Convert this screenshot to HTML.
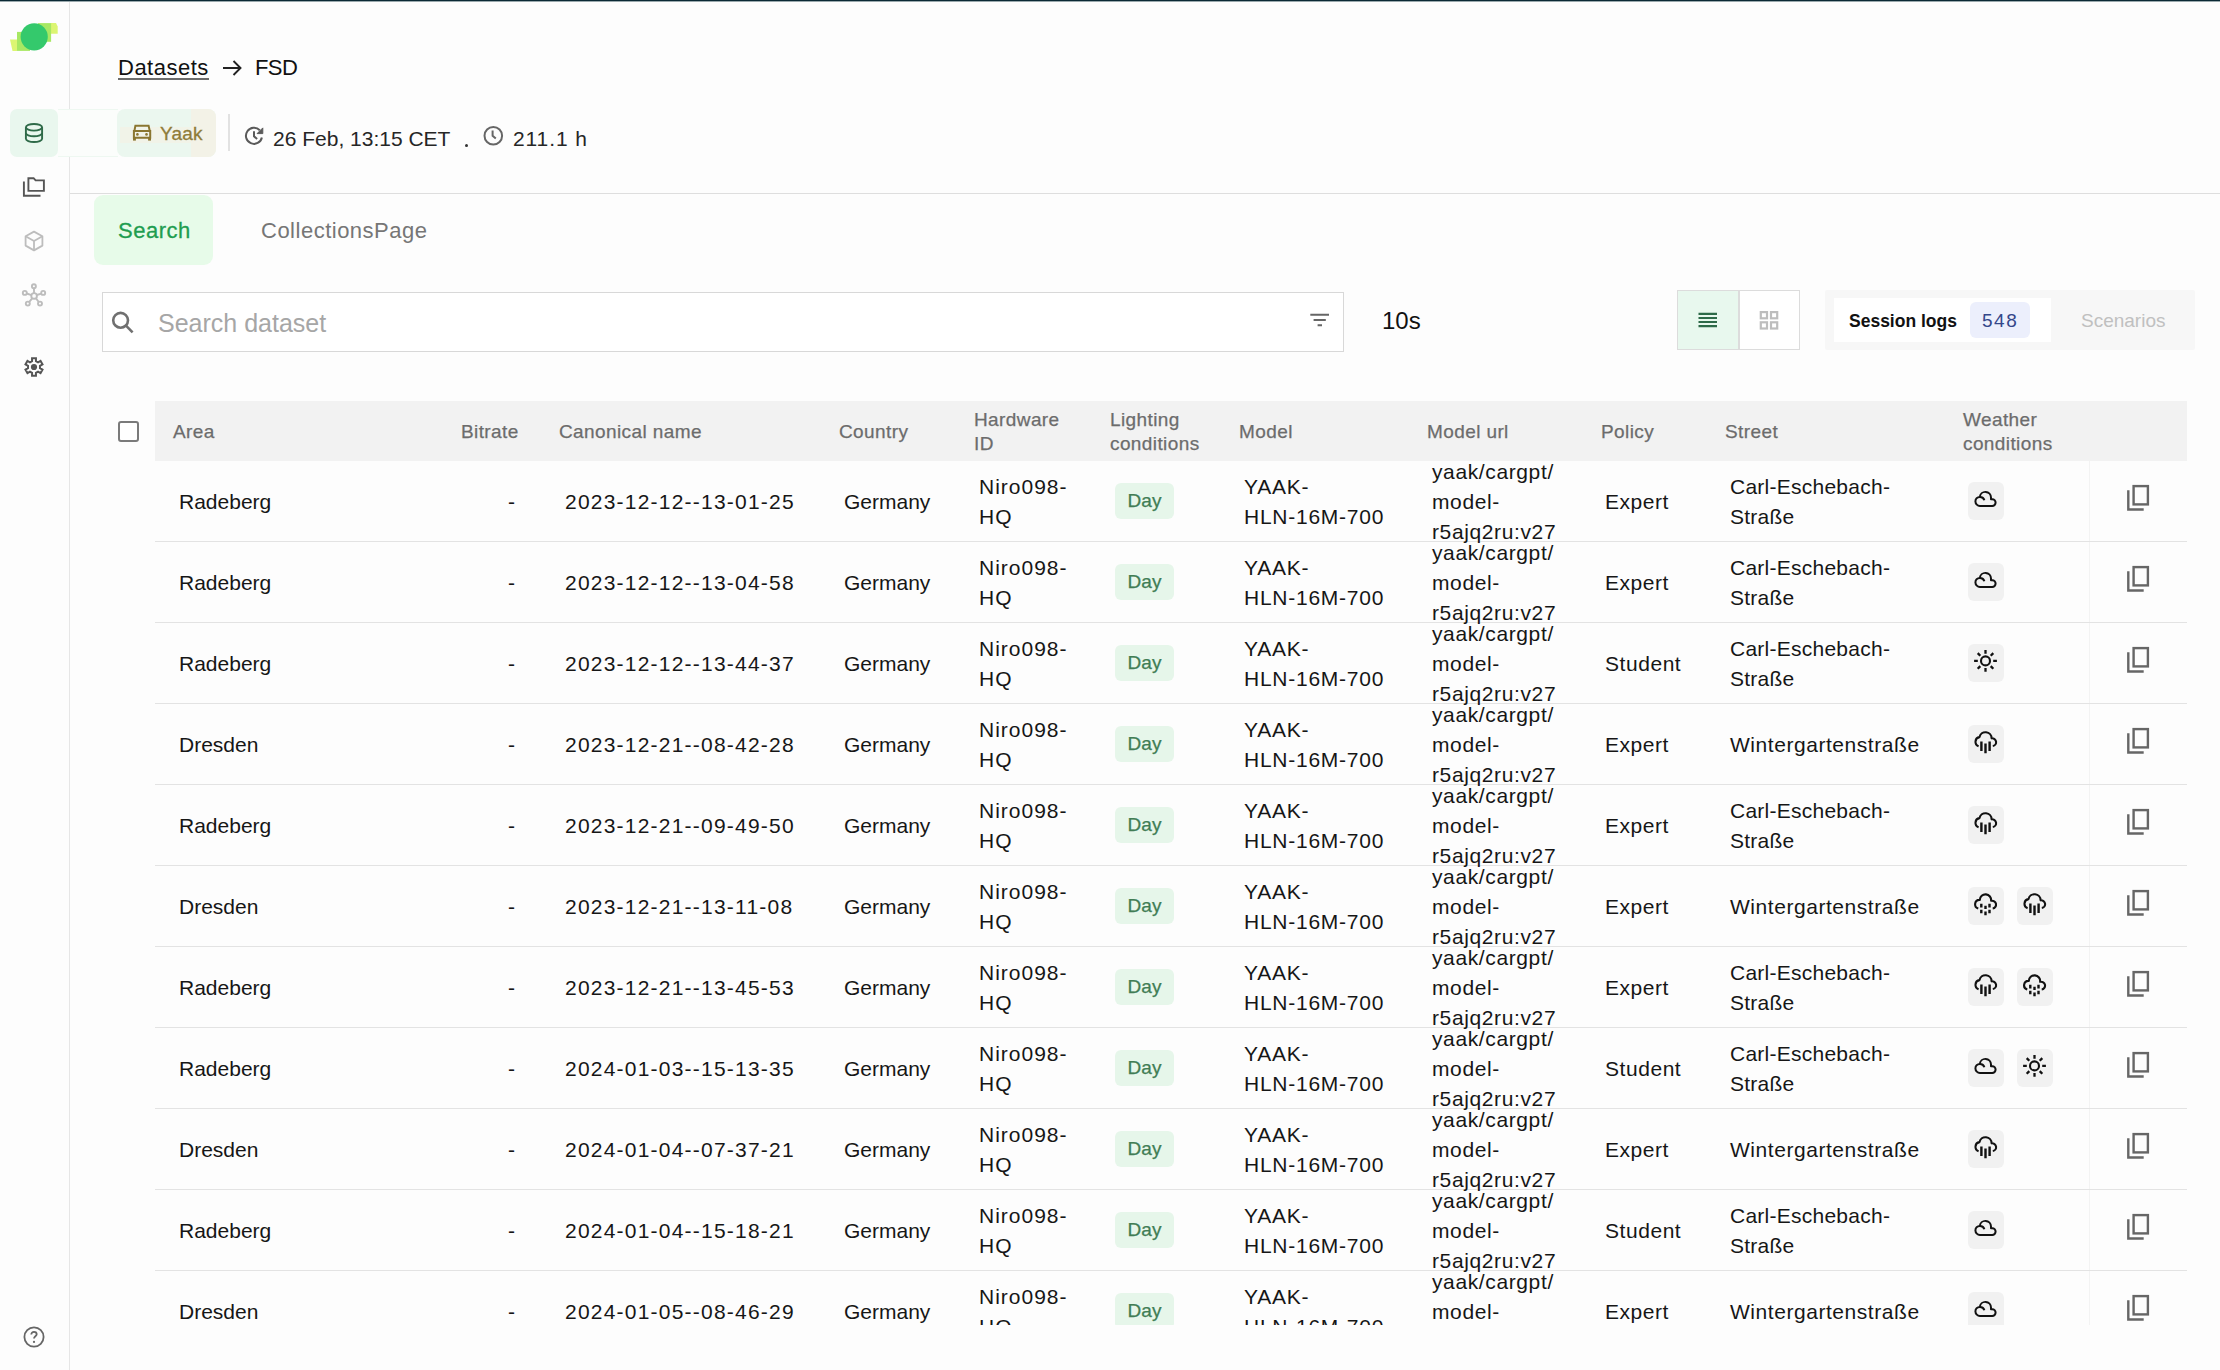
<!DOCTYPE html>
<html><head><meta charset="utf-8"><title>FSD</title>
<style>
*{box-sizing:border-box;margin:0;padding:0}
html,body{width:2220px;height:1370px;overflow:hidden;background:#fdfdfd;font-family:"Liberation Sans",sans-serif;color:#161616}
.abs{position:absolute}
.t{position:absolute;white-space:nowrap}
.topbar{left:0;top:0;width:2220px;height:2px;background:linear-gradient(#0b2935 0,#0b2935 1px,#9aa9ad 1px,#9aa9ad 2px)}
.side{left:0;top:2px;width:70px;height:1368px;border-right:1px solid #e6e6e6;background:#fdfdfd}
.hdr{left:155px;top:401px;width:2032px;height:60px;background:#f2f2f2}
.hd{position:absolute;font-size:19px;line-height:24px;color:#6c6c6c;letter-spacing:0.4px;-webkit-text-stroke:0.25px #6c6c6c}
.row{position:absolute;left:155px;width:2032px;height:81px;border-bottom:1px solid #e3e3e3}
.c{position:absolute;font-size:21px;line-height:30px;color:#161616;white-space:nowrap}
.day{position:absolute;width:59px;height:36px;border-radius:6px;background:#e6f6ea;color:#417d55;font-size:19px;line-height:36px;text-align:center;-webkit-text-stroke:0.25px #417d55}
.wb{position:absolute;width:36px;height:38px;border-radius:6px;background:#f1f1f1}
.wb svg{position:absolute;left:0;top:0;stroke-linecap:butt;stroke-linejoin:round}
</style></head><body>
<div class="abs topbar"></div>
<div class="abs side"></div>

<svg class="abs" style="left:0;top:0" width="70" height="70" viewBox="0 0 70 70">
<path d="M10 39.6H17V50.9H12.5Z" fill="#dcf572"/>
<path d="M51 23.1H56L57.7 26.5V33.7H51Z" fill="#dcf572"/>
<path d="M17 31.9H30V50.9H17Z" fill="#a7e863"/>
<path d="M38 23.1H51.1V41.8H38Z" fill="#a7e863"/>
<circle cx="34.2" cy="36.8" r="13.6" fill="#34c96c"/>
</svg>

<div class="abs" style="left:10px;top:109px;width:48px;height:48px;border-radius:7px;background:#e9f7ee"></div>
<div class="abs" style="left:58px;top:109px;width:60px;height:48px;background:#fbfdfb;border-top:1px solid #eef8f1;border-bottom:1px solid #eef8f1"></div>
<svg class="abs" style="left:22px;top:121px" width="24" height="24" viewBox="0 0 24 24" fill="none" stroke="#2e6a48" stroke-width="1.9">
<ellipse cx="12" cy="6.3" rx="8.1" ry="3.3"/>
<path d="M3.9 6.3V17.7C3.9 19.5 7.5 21 12 21S20.1 19.5 20.1 17.7V6.3"/>
<path d="M3.9 12C3.9 13.8 7.5 15.3 12 15.3S20.1 13.8 20.1 12"/>
</svg>
<svg class="abs" style="left:21px;top:175px" width="26" height="24" viewBox="0 0 26 24" fill="none" stroke="#555" stroke-width="1.9">
<path d="M2.9 6.5V20.7H19.5"/>
<path d="M7.4 3.2H12.6L14.6 5.4H22.9V15.9H7.4Z"/>
</svg>
<svg class="abs" style="left:22px;top:229px" width="24" height="24" viewBox="0 0 24 24" fill="none" stroke="#bdbdbd" stroke-width="1.8" stroke-linejoin="round">
<path d="M12 2.6L20.4 7.2V16.6L12 21.4L3.6 16.6V7.2Z"/>
<path d="M3.6 7.2L12 12L20.4 7.2M12 12V21.4"/>
</svg>
<svg class="abs" style="left:20px;top:282px" width="28" height="26" viewBox="0 0 28 26" fill="none" stroke="#bdbdbd" stroke-width="1.9">
<circle cx="14.1" cy="13.9" r="2.8"/><circle cx="13.9" cy="4.2" r="2.0"/><circle cx="4.8" cy="10.9" r="2.0"/><circle cx="23.2" cy="10.9" r="2.0"/><circle cx="7.8" cy="21.6" r="2.0"/><circle cx="20" cy="21.6" r="2.0"/>
<path d="M14.04 11.10L13.94 6.20M11.44 13.04L6.70 11.51M16.76 13.02L21.30 11.53M12.33 16.07L9.07 20.05M15.80 16.12L18.78 20.01"/>
</svg>
<svg class="abs" style="left:22px;top:355px" width="24" height="24" viewBox="0 0 24 24" fill="none" stroke="#555" stroke-width="2">
<path d="M10.05 6.22L10.05 3.32L13.95 3.32L13.95 6.22L16.03 7.42L18.55 5.97L20.50 9.35L17.98 10.80L17.98 13.20L20.50 14.65L18.55 18.03L16.03 16.58L13.95 17.78L13.95 20.68L10.05 20.68L10.05 17.78L7.97 16.58L5.45 18.03L3.50 14.65L6.02 13.20L6.02 10.80L3.50 9.35L5.45 5.97L7.97 7.42Z"/>
<circle cx="12" cy="12" r="3.1" fill="#555" stroke="none"/>
</svg>
<svg class="abs" style="left:22px;top:1325px" width="24" height="24" viewBox="0 0 24 24" fill="none" stroke="#666" stroke-width="1.8">
<circle cx="12" cy="12" r="9.6"/>
<path d="M9.3 9.4C9.3 7.9 10.5 6.8 12 6.8S14.7 7.9 14.7 9.3C14.7 11.2 12 11.4 12 13.6"/>
<circle cx="12" cy="16.9" r="1.1" fill="#666" stroke="none"/>
</svg>
<div class="t" style="left:118px;top:53px;font-size:22px;line-height:30px;letter-spacing:0.5px;color:#111">Datasets</div>
<div class="abs" style="left:118px;top:78px;width:91px;height:2px;background:#6b6b6b"></div>
<svg class="abs" style="left:221px;top:57px" width="22" height="22" viewBox="0 0 22 22" fill="none" stroke="#222" stroke-width="1.9">
<path d="M2 11H19.5M12.5 4L19.5 11L12.5 18"/></svg>
<div class="t" style="left:255px;top:53px;font-size:22px;line-height:30px;letter-spacing:-0.6px;color:#111">FSD</div>
<div class="abs" style="left:117px;top:109px;width:99px;height:48px;border-radius:8px;background:#ebf7ef;overflow:hidden"><div class="abs" style="left:74px;top:0;width:25px;height:48px;background:#f3f2e7"></div><div class="abs" style="left:3px;top:18px;width:71px;height:16px;background:#f1f3e8"></div></div>
<svg class="abs" style="left:130px;top:122px" width="24" height="22" viewBox="0 0 24 22" fill="none" stroke="#8a7630" stroke-width="2">
<path d="M4.4 8.9L5.4 3.8H18.6L19.8 8.9"/><path d="M3.9 8.9H20.2V15.8H3.9Z"/>
<rect x="3" y="15" width="2.9" height="3.6" fill="#8a7630" stroke="none"/><rect x="18.1" y="15" width="2.9" height="3.6" fill="#8a7630" stroke="none"/>
<circle cx="7.4" cy="12.4" r="1.3" fill="#8a7630" stroke="none"/><circle cx="16.5" cy="12.4" r="1.3" fill="#8a7630" stroke="none"/>
</svg>
<div class="t" style="left:160px;top:120px;font-size:19px;line-height:28px;letter-spacing:0.2px;color:#8f7c38;-webkit-text-stroke:0.3px #8f7c38">Yaak</div>
<div class="abs" style="left:228px;top:114px;width:2px;height:37px;background:#e2e2e2"></div>
<svg class="abs" style="left:240px;top:120px" width="30" height="30" viewBox="0 0 30 30" fill="none" stroke="#5a5a5a" stroke-width="2">
<path d="M21.87 17.47A8.05 8.05 0 1 1 19.79 10.21"/>
<path d="M22.8 7.9V13.6H17.1Z" fill="#5a5a5a" stroke-width="1"/>
<path d="M14 11.2V16.2L17.1 19.1"/>
</svg>
<div class="t" style="left:273px;top:124px;font-size:21px;line-height:30px;color:#262626">26 Feb, 13:15 CET</div>
<div class="abs" style="left:464.5px;top:144px;width:3px;height:3px;border-radius:50%;background:#333"></div>
<svg class="abs" style="left:482px;top:124px" width="24" height="24" viewBox="0 0 24 24" fill="none" stroke="#666" stroke-width="2">
<circle cx="11.3" cy="11.8" r="8.8"/><path d="M10.6 6.6V11.8L13.8 14.6"/></svg>
<div class="t" style="left:513px;top:124px;font-size:21px;line-height:30px;letter-spacing:0.9px;color:#262626">211.1 h</div>
<div class="abs" style="left:70px;top:193px;width:2150px;height:1px;background:#dedede"></div>
<div class="abs" style="left:94px;top:195px;width:119px;height:70px;border-radius:9px;background:#e7fbe9"></div>
<div class="t" style="left:118px;top:215.5px;font-size:22px;line-height:30px;letter-spacing:0.5px;color:#1f9d50;-webkit-text-stroke:0.3px #1f9d50">Search</div>
<div class="t" style="left:261px;top:215.5px;font-size:22px;line-height:30px;letter-spacing:0.5px;color:#767676">CollectionsPage</div>
<div class="abs" style="left:102px;top:292px;width:1242px;height:60px;border:1px solid #d8d8d8;background:#fff"></div>
<svg class="abs" style="left:109px;top:308px" width="28" height="28" viewBox="0 0 28 28" fill="none" stroke="#707070" stroke-width="2.6">
<circle cx="11.6" cy="12.3" r="7.4"/><path d="M17 17.7L23.6 24.4"/></svg>
<div class="t" style="left:158px;top:306px;font-size:25px;line-height:34px;color:#a6a6a6">Search dataset</div>
<svg class="abs" style="left:1306px;top:309px" width="28" height="22" viewBox="0 0 28 22" fill="none" stroke="#666" stroke-width="2.1">
<path d="M4.3 5.7H23M7.6 11H19.8M11.6 16.3H16"/></svg>
<div class="t" style="left:1382px;top:305px;font-size:24px;line-height:32px;color:#111">10s</div>
<div class="abs" style="left:1677px;top:290px;width:123px;height:60px;border:1.5px solid #dcdcdc;background:#fff"></div>
<div class="abs" style="left:1678px;top:291px;width:60px;height:58px;background:#e8f8ee"></div>
<div class="abs" style="left:1738px;top:291px;width:1.5px;height:58px;background:#dcdcdc"></div>
<svg class="abs" style="left:1696px;top:308px" width="24" height="24" viewBox="0 0 24 24" fill="none" stroke="#2d6a48" stroke-width="2.2">
<path d="M2.5 5.9H21M2.5 10H21M2.5 14H21M2.5 18.1H21"/></svg>
<svg class="abs" style="left:1757px;top:308px" width="24" height="24" viewBox="0 0 24 24" fill="none" stroke="#bdbdbd" stroke-width="2.2">
<rect x="3.8" y="4.1" width="6.2" height="6.2"/><rect x="14" y="4.1" width="6.2" height="6.2"/>
<rect x="3.8" y="14.3" width="6.2" height="6.2"/><rect x="14" y="14.3" width="6.2" height="6.2"/></svg>
<div class="abs" style="left:1825px;top:290px;width:370px;height:60px;background:#f7f7f7;border-radius:2px"></div>
<div class="abs" style="left:1834px;top:298px;width:217px;height:44px;background:#fff"></div>
<div class="t" style="left:1849px;top:307px;font-size:17.5px;line-height:28px;font-weight:700;color:#111">Session logs</div>
<div class="abs" style="left:1970px;top:302px;width:60px;height:36px;border-radius:6px;background:#eceffc"></div>
<div class="t" style="left:1982px;top:307px;font-size:19px;line-height:28px;letter-spacing:1.5px;color:#34478a">548</div>
<div class="t" style="left:2081px;top:307px;font-size:19px;line-height:28px;color:#c0c0c0">Scenarios</div>
<div class="abs hdr"></div>
<div class="abs" style="left:118px;top:421px;width:21px;height:21px;border:2.2px solid #7a7a7a;border-radius:3px;background:#fff"></div>
<div class="hd" style="left:173px;top:420px">Area</div>
<div class="hd" style="left:461px;top:420px">Bitrate</div>
<div class="hd" style="left:559px;top:420px">Canonical name</div>
<div class="hd" style="left:839px;top:420px">Country</div>
<div class="hd" style="left:974px;top:408px">Hardware<br>ID</div>
<div class="hd" style="left:1110px;top:408px">Lighting<br>conditions</div>
<div class="hd" style="left:1239px;top:420px">Model</div>
<div class="hd" style="left:1427px;top:420px">Model url</div>
<div class="hd" style="left:1601px;top:420px">Policy</div>
<div class="hd" style="left:1725px;top:420px">Street</div>
<div class="hd" style="left:1963px;top:408px">Weather<br>conditions</div>
<div class="abs" style="left:2089px;top:461px;width:1px;height:864px;background:#f3f3f3"></div>
<div class="abs" style="left:0;top:461px;width:2220px;height:864px;overflow:hidden">
<div class="row" style="top:0px"></div>
<div class="c" style="left:179px;top:26px">Radeberg</div>
<div class="c" style="left:508px;top:26px">-</div>
<div class="c" style="left:565px;top:26px;letter-spacing:1.22px">2023-12-12--13-01-25</div>
<div class="c" style="left:844px;top:26px">Germany</div>
<div class="c" style="left:979px;top:11px;letter-spacing:1px">Niro098-<br>HQ</div>
<div class="day" style="left:1115px;top:22px">Day</div>
<div class="c" style="left:1244px;top:11px;letter-spacing:0.75px">YAAK-<br>HLN-16M-700</div>
<div class="c" style="left:1432px;top:-4px;letter-spacing:0.62px">yaak/cargpt/<br>model-<br>r5ajq2ru:v27</div>
<div class="c" style="left:1605px;top:26px;letter-spacing:0.55px">Expert</div>
<div class="c" style="left:1730px;top:11px;letter-spacing:0.25px">Carl-Eschebach-<br>Straße</div>
<div class="wb" style="left:1968px;top:21px"><svg width="36" height="38" viewBox="0 0 36 38" fill="none" stroke="#111"><path stroke-width="2" d="M12 23.9H24.3A3.3 3.3 0 0 0 24.3 17.3H23V15.5A5.6 5.6 0 0 0 11.83 14.9A4.5 4.5 0 0 0 12 23.9ZM11.83 14.9A4.5 4.5 0 0 1 16.35 18.24"/></svg></div>
<svg class="abs" style="left:2124px;top:21px" width="30" height="32" viewBox="0 0 30 32" fill="none" stroke="#666" stroke-width="2.4">
<rect x="9.6" y="4.1" width="14.3" height="18.3"/><path d="M4.3 8.3V27.5H19.7"/></svg>
<div class="row" style="top:81px"></div>
<div class="c" style="left:179px;top:107px">Radeberg</div>
<div class="c" style="left:508px;top:107px">-</div>
<div class="c" style="left:565px;top:107px;letter-spacing:1.22px">2023-12-12--13-04-58</div>
<div class="c" style="left:844px;top:107px">Germany</div>
<div class="c" style="left:979px;top:92px;letter-spacing:1px">Niro098-<br>HQ</div>
<div class="day" style="left:1115px;top:103px">Day</div>
<div class="c" style="left:1244px;top:92px;letter-spacing:0.75px">YAAK-<br>HLN-16M-700</div>
<div class="c" style="left:1432px;top:77px;letter-spacing:0.62px">yaak/cargpt/<br>model-<br>r5ajq2ru:v27</div>
<div class="c" style="left:1605px;top:107px;letter-spacing:0.55px">Expert</div>
<div class="c" style="left:1730px;top:92px;letter-spacing:0.25px">Carl-Eschebach-<br>Straße</div>
<div class="wb" style="left:1968px;top:102px"><svg width="36" height="38" viewBox="0 0 36 38" fill="none" stroke="#111"><path stroke-width="2" d="M12 23.9H24.3A3.3 3.3 0 0 0 24.3 17.3H23V15.5A5.6 5.6 0 0 0 11.83 14.9A4.5 4.5 0 0 0 12 23.9ZM11.83 14.9A4.5 4.5 0 0 1 16.35 18.24"/></svg></div>
<svg class="abs" style="left:2124px;top:102px" width="30" height="32" viewBox="0 0 30 32" fill="none" stroke="#666" stroke-width="2.4">
<rect x="9.6" y="4.1" width="14.3" height="18.3"/><path d="M4.3 8.3V27.5H19.7"/></svg>
<div class="row" style="top:162px"></div>
<div class="c" style="left:179px;top:188px">Radeberg</div>
<div class="c" style="left:508px;top:188px">-</div>
<div class="c" style="left:565px;top:188px;letter-spacing:1.22px">2023-12-12--13-44-37</div>
<div class="c" style="left:844px;top:188px">Germany</div>
<div class="c" style="left:979px;top:173px;letter-spacing:1px">Niro098-<br>HQ</div>
<div class="day" style="left:1115px;top:184px">Day</div>
<div class="c" style="left:1244px;top:173px;letter-spacing:0.75px">YAAK-<br>HLN-16M-700</div>
<div class="c" style="left:1432px;top:158px;letter-spacing:0.62px">yaak/cargpt/<br>model-<br>r5ajq2ru:v27</div>
<div class="c" style="left:1605px;top:188px;letter-spacing:0.55px">Student</div>
<div class="c" style="left:1730px;top:173px;letter-spacing:0.25px">Carl-Eschebach-<br>Straße</div>
<div class="wb" style="left:1968px;top:183px"><svg width="36" height="38" viewBox="0 0 36 38" fill="none" stroke="#111"><circle cx="17.5" cy="16.9" r="4.5" stroke-width="2.1"/><path stroke-width="2.3" d="M17.5 6V9.7M17.5 24.1V27.8M6.1 16.9H9.8M25.2 16.9H28.9M9.7 9.1L12.3 11.7M22.7 22.1L25.3 24.7M9.7 24.7L12.3 22.1M22.7 11.7L25.3 9.1"/></svg></div>
<svg class="abs" style="left:2124px;top:183px" width="30" height="32" viewBox="0 0 30 32" fill="none" stroke="#666" stroke-width="2.4">
<rect x="9.6" y="4.1" width="14.3" height="18.3"/><path d="M4.3 8.3V27.5H19.7"/></svg>
<div class="row" style="top:243px"></div>
<div class="c" style="left:179px;top:269px">Dresden</div>
<div class="c" style="left:508px;top:269px">-</div>
<div class="c" style="left:565px;top:269px;letter-spacing:1.22px">2023-12-21--08-42-28</div>
<div class="c" style="left:844px;top:269px">Germany</div>
<div class="c" style="left:979px;top:254px;letter-spacing:1px">Niro098-<br>HQ</div>
<div class="day" style="left:1115px;top:265px">Day</div>
<div class="c" style="left:1244px;top:254px;letter-spacing:0.75px">YAAK-<br>HLN-16M-700</div>
<div class="c" style="left:1432px;top:239px;letter-spacing:0.62px">yaak/cargpt/<br>model-<br>r5ajq2ru:v27</div>
<div class="c" style="left:1605px;top:269px;letter-spacing:0.55px">Expert</div>
<div class="c" style="left:1730px;top:269px;letter-spacing:0.55px">Wintergartenstraße</div>
<div class="wb" style="left:1968px;top:264px"><svg width="36" height="38" viewBox="0 0 36 38" fill="none" stroke="#111"><path stroke-width="2.1" d="M10.6 21.22A4.7 4.7 0 0 1 11.51 12.15A6.1 6.1 0 0 1 23.6 13.33A3.9 3.9 0 0 1 24.81 21.04"/><path stroke-width="2.4" d="M13.4 16.4V26.1M17.5 18.4V28.2M21.6 16.4V26.1"/></svg></div>
<svg class="abs" style="left:2124px;top:264px" width="30" height="32" viewBox="0 0 30 32" fill="none" stroke="#666" stroke-width="2.4">
<rect x="9.6" y="4.1" width="14.3" height="18.3"/><path d="M4.3 8.3V27.5H19.7"/></svg>
<div class="row" style="top:324px"></div>
<div class="c" style="left:179px;top:350px">Radeberg</div>
<div class="c" style="left:508px;top:350px">-</div>
<div class="c" style="left:565px;top:350px;letter-spacing:1.22px">2023-12-21--09-49-50</div>
<div class="c" style="left:844px;top:350px">Germany</div>
<div class="c" style="left:979px;top:335px;letter-spacing:1px">Niro098-<br>HQ</div>
<div class="day" style="left:1115px;top:346px">Day</div>
<div class="c" style="left:1244px;top:335px;letter-spacing:0.75px">YAAK-<br>HLN-16M-700</div>
<div class="c" style="left:1432px;top:320px;letter-spacing:0.62px">yaak/cargpt/<br>model-<br>r5ajq2ru:v27</div>
<div class="c" style="left:1605px;top:350px;letter-spacing:0.55px">Expert</div>
<div class="c" style="left:1730px;top:335px;letter-spacing:0.25px">Carl-Eschebach-<br>Straße</div>
<div class="wb" style="left:1968px;top:345px"><svg width="36" height="38" viewBox="0 0 36 38" fill="none" stroke="#111"><path stroke-width="2.1" d="M10.6 21.22A4.7 4.7 0 0 1 11.51 12.15A6.1 6.1 0 0 1 23.6 13.33A3.9 3.9 0 0 1 24.81 21.04"/><path stroke-width="2.4" d="M13.4 16.4V26.1M17.5 18.4V28.2M21.6 16.4V26.1"/></svg></div>
<svg class="abs" style="left:2124px;top:345px" width="30" height="32" viewBox="0 0 30 32" fill="none" stroke="#666" stroke-width="2.4">
<rect x="9.6" y="4.1" width="14.3" height="18.3"/><path d="M4.3 8.3V27.5H19.7"/></svg>
<div class="row" style="top:405px"></div>
<div class="c" style="left:179px;top:431px">Dresden</div>
<div class="c" style="left:508px;top:431px">-</div>
<div class="c" style="left:565px;top:431px;letter-spacing:1.22px">2023-12-21--13-11-08</div>
<div class="c" style="left:844px;top:431px">Germany</div>
<div class="c" style="left:979px;top:416px;letter-spacing:1px">Niro098-<br>HQ</div>
<div class="day" style="left:1115px;top:427px">Day</div>
<div class="c" style="left:1244px;top:416px;letter-spacing:0.75px">YAAK-<br>HLN-16M-700</div>
<div class="c" style="left:1432px;top:401px;letter-spacing:0.62px">yaak/cargpt/<br>model-<br>r5ajq2ru:v27</div>
<div class="c" style="left:1605px;top:431px;letter-spacing:0.55px">Expert</div>
<div class="c" style="left:1730px;top:431px;letter-spacing:0.55px">Wintergartenstraße</div>
<div class="wb" style="left:1968px;top:426px"><svg width="36" height="38" viewBox="0 0 36 38" fill="none" stroke="#111"><path stroke-width="2.1" d="M10.26 21.52A4.4 4.4 0 0 1 11.8 12.91A5.7 5.7 0 1 1 23.15 13.82A3.9 3.9 0 1 1 24.71 21.45"/><path stroke-width="2.4" d="M13.3 16.7V20.4M13.3 22.8V26.3M17.5 18.7V22M17.5 24.6V28.2M21.5 16.7V20.4M21.5 22.8V26.3"/></svg></div>
<div class="wb" style="left:2017px;top:426px"><svg width="36" height="38" viewBox="0 0 36 38" fill="none" stroke="#111"><path stroke-width="2.1" d="M10.6 21.22A4.7 4.7 0 0 1 11.51 12.15A6.1 6.1 0 0 1 23.6 13.33A3.9 3.9 0 0 1 24.81 21.04"/><path stroke-width="2.4" d="M13.4 16.4V26.1M17.5 18.4V28.2M21.6 16.4V26.1"/></svg></div>
<svg class="abs" style="left:2124px;top:426px" width="30" height="32" viewBox="0 0 30 32" fill="none" stroke="#666" stroke-width="2.4">
<rect x="9.6" y="4.1" width="14.3" height="18.3"/><path d="M4.3 8.3V27.5H19.7"/></svg>
<div class="row" style="top:486px"></div>
<div class="c" style="left:179px;top:512px">Radeberg</div>
<div class="c" style="left:508px;top:512px">-</div>
<div class="c" style="left:565px;top:512px;letter-spacing:1.22px">2023-12-21--13-45-53</div>
<div class="c" style="left:844px;top:512px">Germany</div>
<div class="c" style="left:979px;top:497px;letter-spacing:1px">Niro098-<br>HQ</div>
<div class="day" style="left:1115px;top:508px">Day</div>
<div class="c" style="left:1244px;top:497px;letter-spacing:0.75px">YAAK-<br>HLN-16M-700</div>
<div class="c" style="left:1432px;top:482px;letter-spacing:0.62px">yaak/cargpt/<br>model-<br>r5ajq2ru:v27</div>
<div class="c" style="left:1605px;top:512px;letter-spacing:0.55px">Expert</div>
<div class="c" style="left:1730px;top:497px;letter-spacing:0.25px">Carl-Eschebach-<br>Straße</div>
<div class="wb" style="left:1968px;top:507px"><svg width="36" height="38" viewBox="0 0 36 38" fill="none" stroke="#111"><path stroke-width="2.1" d="M10.6 21.22A4.7 4.7 0 0 1 11.51 12.15A6.1 6.1 0 0 1 23.6 13.33A3.9 3.9 0 0 1 24.81 21.04"/><path stroke-width="2.4" d="M13.4 16.4V26.1M17.5 18.4V28.2M21.6 16.4V26.1"/></svg></div>
<div class="wb" style="left:2017px;top:507px"><svg width="36" height="38" viewBox="0 0 36 38" fill="none" stroke="#111"><path stroke-width="2.1" d="M10.26 21.52A4.4 4.4 0 0 1 11.8 12.91A5.7 5.7 0 1 1 23.15 13.82A3.9 3.9 0 1 1 24.71 21.45"/><path stroke-width="2.4" d="M13.3 16.7V20.4M13.3 22.8V26.3M17.5 18.7V22M17.5 24.6V28.2M21.5 16.7V20.4M21.5 22.8V26.3"/></svg></div>
<svg class="abs" style="left:2124px;top:507px" width="30" height="32" viewBox="0 0 30 32" fill="none" stroke="#666" stroke-width="2.4">
<rect x="9.6" y="4.1" width="14.3" height="18.3"/><path d="M4.3 8.3V27.5H19.7"/></svg>
<div class="row" style="top:567px"></div>
<div class="c" style="left:179px;top:593px">Radeberg</div>
<div class="c" style="left:508px;top:593px">-</div>
<div class="c" style="left:565px;top:593px;letter-spacing:1.22px">2024-01-03--15-13-35</div>
<div class="c" style="left:844px;top:593px">Germany</div>
<div class="c" style="left:979px;top:578px;letter-spacing:1px">Niro098-<br>HQ</div>
<div class="day" style="left:1115px;top:589px">Day</div>
<div class="c" style="left:1244px;top:578px;letter-spacing:0.75px">YAAK-<br>HLN-16M-700</div>
<div class="c" style="left:1432px;top:563px;letter-spacing:0.62px">yaak/cargpt/<br>model-<br>r5ajq2ru:v27</div>
<div class="c" style="left:1605px;top:593px;letter-spacing:0.55px">Student</div>
<div class="c" style="left:1730px;top:578px;letter-spacing:0.25px">Carl-Eschebach-<br>Straße</div>
<div class="wb" style="left:1968px;top:588px"><svg width="36" height="38" viewBox="0 0 36 38" fill="none" stroke="#111"><path stroke-width="2" d="M12 23.9H24.3A3.3 3.3 0 0 0 24.3 17.3H23V15.5A5.6 5.6 0 0 0 11.83 14.9A4.5 4.5 0 0 0 12 23.9ZM11.83 14.9A4.5 4.5 0 0 1 16.35 18.24"/></svg></div>
<div class="wb" style="left:2017px;top:588px"><svg width="36" height="38" viewBox="0 0 36 38" fill="none" stroke="#111"><circle cx="17.5" cy="16.9" r="4.5" stroke-width="2.1"/><path stroke-width="2.3" d="M17.5 6V9.7M17.5 24.1V27.8M6.1 16.9H9.8M25.2 16.9H28.9M9.7 9.1L12.3 11.7M22.7 22.1L25.3 24.7M9.7 24.7L12.3 22.1M22.7 11.7L25.3 9.1"/></svg></div>
<svg class="abs" style="left:2124px;top:588px" width="30" height="32" viewBox="0 0 30 32" fill="none" stroke="#666" stroke-width="2.4">
<rect x="9.6" y="4.1" width="14.3" height="18.3"/><path d="M4.3 8.3V27.5H19.7"/></svg>
<div class="row" style="top:648px"></div>
<div class="c" style="left:179px;top:674px">Dresden</div>
<div class="c" style="left:508px;top:674px">-</div>
<div class="c" style="left:565px;top:674px;letter-spacing:1.22px">2024-01-04--07-37-21</div>
<div class="c" style="left:844px;top:674px">Germany</div>
<div class="c" style="left:979px;top:659px;letter-spacing:1px">Niro098-<br>HQ</div>
<div class="day" style="left:1115px;top:670px">Day</div>
<div class="c" style="left:1244px;top:659px;letter-spacing:0.75px">YAAK-<br>HLN-16M-700</div>
<div class="c" style="left:1432px;top:644px;letter-spacing:0.62px">yaak/cargpt/<br>model-<br>r5ajq2ru:v27</div>
<div class="c" style="left:1605px;top:674px;letter-spacing:0.55px">Expert</div>
<div class="c" style="left:1730px;top:674px;letter-spacing:0.55px">Wintergartenstraße</div>
<div class="wb" style="left:1968px;top:669px"><svg width="36" height="38" viewBox="0 0 36 38" fill="none" stroke="#111"><path stroke-width="2.1" d="M10.6 21.22A4.7 4.7 0 0 1 11.51 12.15A6.1 6.1 0 0 1 23.6 13.33A3.9 3.9 0 0 1 24.81 21.04"/><path stroke-width="2.4" d="M13.4 16.4V26.1M17.5 18.4V28.2M21.6 16.4V26.1"/></svg></div>
<svg class="abs" style="left:2124px;top:669px" width="30" height="32" viewBox="0 0 30 32" fill="none" stroke="#666" stroke-width="2.4">
<rect x="9.6" y="4.1" width="14.3" height="18.3"/><path d="M4.3 8.3V27.5H19.7"/></svg>
<div class="row" style="top:729px"></div>
<div class="c" style="left:179px;top:755px">Radeberg</div>
<div class="c" style="left:508px;top:755px">-</div>
<div class="c" style="left:565px;top:755px;letter-spacing:1.22px">2024-01-04--15-18-21</div>
<div class="c" style="left:844px;top:755px">Germany</div>
<div class="c" style="left:979px;top:740px;letter-spacing:1px">Niro098-<br>HQ</div>
<div class="day" style="left:1115px;top:751px">Day</div>
<div class="c" style="left:1244px;top:740px;letter-spacing:0.75px">YAAK-<br>HLN-16M-700</div>
<div class="c" style="left:1432px;top:725px;letter-spacing:0.62px">yaak/cargpt/<br>model-<br>r5ajq2ru:v27</div>
<div class="c" style="left:1605px;top:755px;letter-spacing:0.55px">Student</div>
<div class="c" style="left:1730px;top:740px;letter-spacing:0.25px">Carl-Eschebach-<br>Straße</div>
<div class="wb" style="left:1968px;top:750px"><svg width="36" height="38" viewBox="0 0 36 38" fill="none" stroke="#111"><path stroke-width="2" d="M12 23.9H24.3A3.3 3.3 0 0 0 24.3 17.3H23V15.5A5.6 5.6 0 0 0 11.83 14.9A4.5 4.5 0 0 0 12 23.9ZM11.83 14.9A4.5 4.5 0 0 1 16.35 18.24"/></svg></div>
<svg class="abs" style="left:2124px;top:750px" width="30" height="32" viewBox="0 0 30 32" fill="none" stroke="#666" stroke-width="2.4">
<rect x="9.6" y="4.1" width="14.3" height="18.3"/><path d="M4.3 8.3V27.5H19.7"/></svg>
<div class="row" style="top:810px"></div>
<div class="c" style="left:179px;top:836px">Dresden</div>
<div class="c" style="left:508px;top:836px">-</div>
<div class="c" style="left:565px;top:836px;letter-spacing:1.22px">2024-01-05--08-46-29</div>
<div class="c" style="left:844px;top:836px">Germany</div>
<div class="c" style="left:979px;top:821px;letter-spacing:1px">Niro098-<br>HQ</div>
<div class="day" style="left:1115px;top:832px">Day</div>
<div class="c" style="left:1244px;top:821px;letter-spacing:0.75px">YAAK-<br>HLN-16M-700</div>
<div class="c" style="left:1432px;top:806px;letter-spacing:0.62px">yaak/cargpt/<br>model-<br>r5ajq2ru:v27</div>
<div class="c" style="left:1605px;top:836px;letter-spacing:0.55px">Expert</div>
<div class="c" style="left:1730px;top:836px;letter-spacing:0.55px">Wintergartenstraße</div>
<div class="wb" style="left:1968px;top:831px"><svg width="36" height="38" viewBox="0 0 36 38" fill="none" stroke="#111"><path stroke-width="2" d="M12 23.9H24.3A3.3 3.3 0 0 0 24.3 17.3H23V15.5A5.6 5.6 0 0 0 11.83 14.9A4.5 4.5 0 0 0 12 23.9ZM11.83 14.9A4.5 4.5 0 0 1 16.35 18.24"/></svg></div>
<svg class="abs" style="left:2124px;top:831px" width="30" height="32" viewBox="0 0 30 32" fill="none" stroke="#666" stroke-width="2.4">
<rect x="9.6" y="4.1" width="14.3" height="18.3"/><path d="M4.3 8.3V27.5H19.7"/></svg>
</div>
</body></html>
